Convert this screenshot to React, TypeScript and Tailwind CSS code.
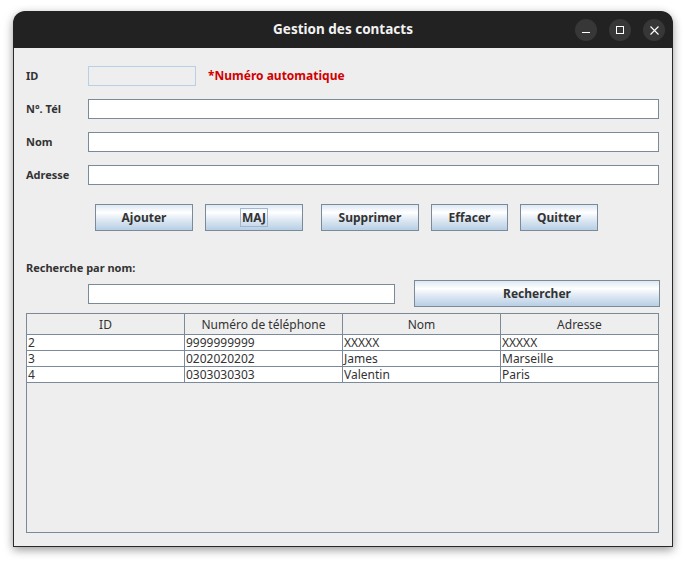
import React from "react";

const font = { fontFamily: '"Noto Sans", "Open Sans", sans-serif' };

const btn =
  "h-[27px] border border-[#7a8a99] bg-[linear-gradient(to_bottom,#dde8f3_0%,#ffffff_30%,#dde8f3_60%,#b8cfe5_100%)] text-[12px] font-bold text-[#333333] flex items-center justify-center shrink-0";

const field = "h-[20px] border border-[#7a8a99] bg-white shrink-0";

const rows = [
  ["2", "9999999999", "XXXXX", "XXXXX"],
  ["3", "0202020202", "James", "Marseille"],
  ["4", "0303030303", "Valentin", "Paris"],
];

const headers = ["ID", "Numéro de téléphone", "Nom", "Adresse"];
const colW = ["w-[158px]", "w-[158px]", "w-[158px]", "w-[157px]"];

function Label({ children }: { children: React.ReactNode }) {
  return (
    <div className="w-[62px] shrink-0 text-[11px] font-bold text-[#333333]">{children}</div>
  );
}

export default function App() {
  return (
    <div className="min-h-[563px] w-[686px] bg-white pl-[13px] pt-[11px]" style={font}>
      <div className="flex w-[660px] flex-col rounded-t-[12px] shadow-[0_3px_10px_rgba(0,0,0,0.4)]">
        {/* title bar */}
        <div className="relative flex h-[37px] items-center justify-center rounded-t-[12px] bg-[#222222]">
          <span className="text-[13.5px] font-bold text-[#f2f2f2]">Gestion des contacts</span>
          <div className="absolute right-[8px] top-[8px] flex gap-[12px]">
            <div className="flex h-[22px] w-[22px] items-center justify-center rounded-full bg-[#373737]">
              <div className="mt-[5px] h-[1px] w-[8px] bg-white" />
            </div>
            <div className="flex h-[22px] w-[22px] items-center justify-center rounded-full bg-[#373737]">
              <div className="h-[8px] w-[8px] border border-white" />
            </div>
            <div className="flex h-[22px] w-[22px] items-center justify-center rounded-full bg-[#373737]">
              <svg width="9" height="9" viewBox="0 0 9 9">
                <path d="M0.5 0.5 L8.5 8.5 M8.5 0.5 L0.5 8.5" stroke="white" strokeWidth="1.1" />
              </svg>
            </div>
          </div>
        </div>
        {/* content */}
        <div className="flex h-[499px] flex-col border-x border-b border-[#2a2a2a] bg-[#eeeeee] px-[12px]">
          <div className="mt-[18px] flex h-[20px] items-center">
            <Label>ID</Label>
            <div className="h-[20px] w-[108px] shrink-0 border border-[#b8cfe5] bg-[#eeeeee]" />
            <span className="ml-[12px] text-[12px] font-bold text-[#d20000]">*Numéro automatique</span>
          </div>
          <div className="mt-[13px] flex h-[20px] items-center">
            <Label>N°. Tél</Label>
            <div className={field + " w-[571px]"} />
          </div>
          <div className="mt-[13px] flex h-[20px] items-center">
            <Label>Nom</Label>
            <div className={field + " w-[571px]"} />
          </div>
          <div className="mt-[13px] flex h-[20px] items-center">
            <Label>Adresse</Label>
            <div className={field + " w-[571px]"} />
          </div>

          <div className="mt-[19px] flex h-[27px] items-center">
            <div className={btn + " ml-[69px] w-[98px]"}>Ajouter</div>
            <div className={btn + " ml-[12px] w-[98px]"}>
              <span className="flex h-[19px] items-center border border-[#a3b8cc] px-[1px]">MAJ</span>
            </div>
            <div className={btn + " ml-[18px] w-[98px]"}>Supprimer</div>
            <div className={btn + " ml-[12px] w-[77px]"}>Effacer</div>
            <div className={btn + " ml-[12px] w-[78px]"}>Quitter</div>
          </div>

          <div className="mt-[29px] h-[15px] text-[11px] font-bold leading-[15px] text-[#333333]">
            Recherche par nom:
          </div>

          <div className="mt-[5px] flex h-[27px] items-center">
            <div className={field + " ml-[62px] w-[307px]"} />
            <div className={btn + " ml-[19px] w-[246px]"}>Rechercher</div>
          </div>

          <div className="mt-[6px] flex h-[220px] w-[633px] flex-col border border-[#7a8a99] bg-[#eeeeee]">
            <div className="flex h-[21px] border-b border-[#7a8a99]">
              {headers.map((h, i) => (
                <div
                  key={h}
                  className={
                    colW[i] +
                    " flex items-center justify-center pt-[1px] text-[12px] text-[#333333] " +
                    (i < 3 ? "border-r border-[#7a8a99]" : "")
                  }
                >
                  {h}
                </div>
              ))}
            </div>
            {rows.map((r) => (
              <div key={r[0]} className="flex h-[16px] border-b border-[#7a8a99] bg-white">
                {r.map((c, i) => (
                  <div
                    key={i}
                    className={
                      colW[i] +
                      " flex items-center overflow-hidden whitespace-nowrap pl-[1px] text-[12px] leading-[15px] text-[#333333] " +
                      (i < 3 ? "border-r border-[#7a8a99]" : "")
                    }
                  >
                    {c}
                  </div>
                ))}
              </div>
            ))}
          </div>
        </div>
      </div>
    </div>
  );
}
